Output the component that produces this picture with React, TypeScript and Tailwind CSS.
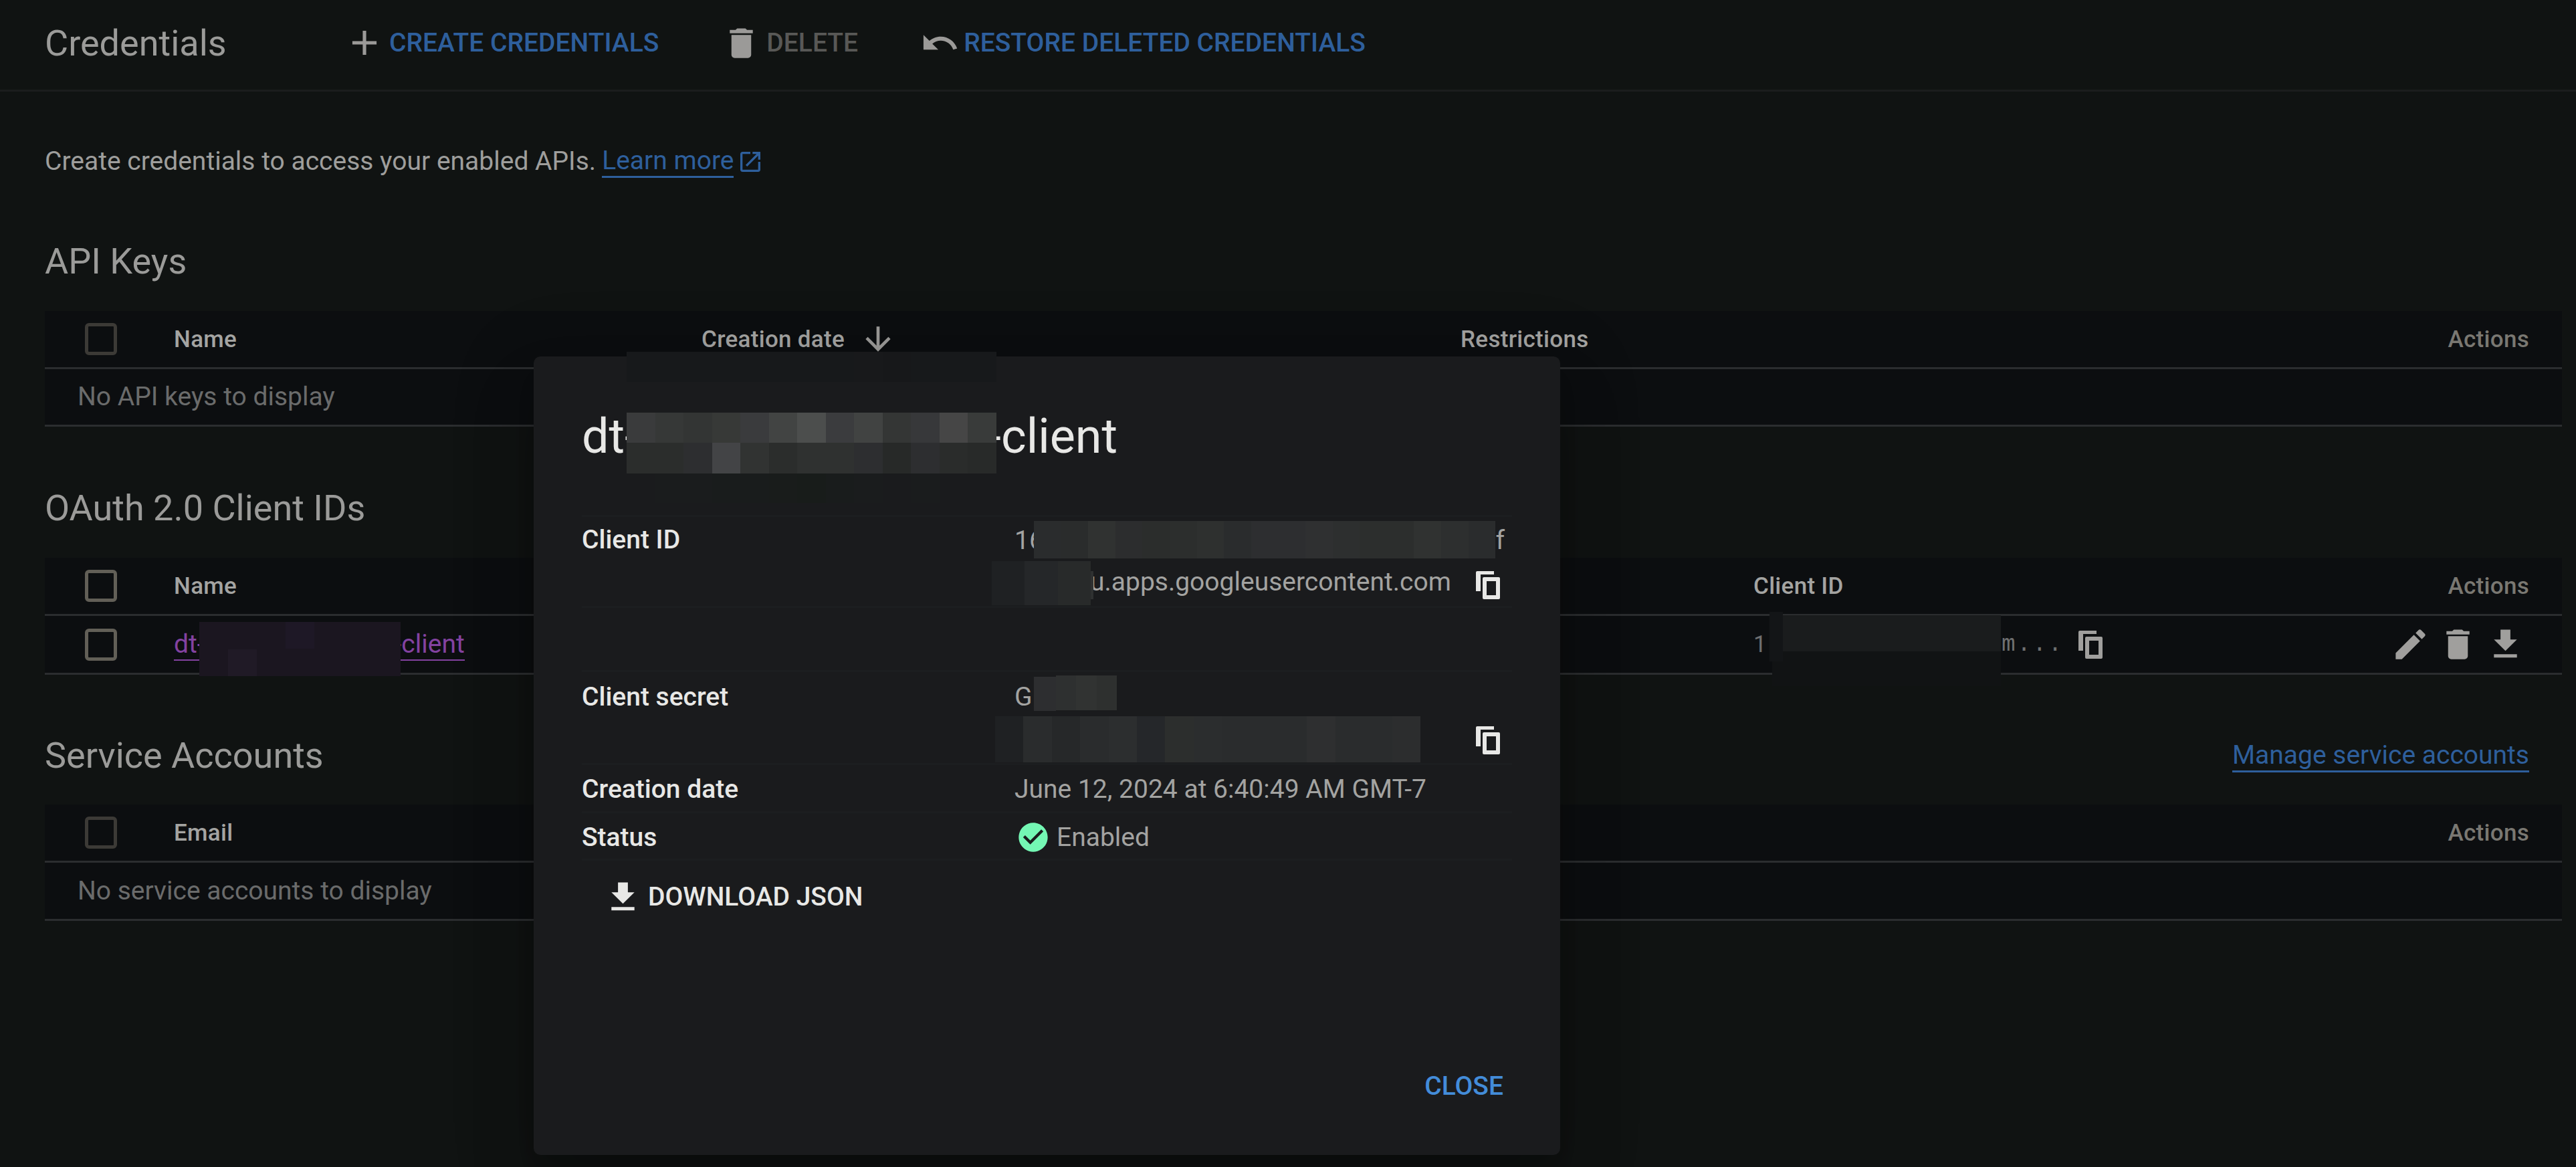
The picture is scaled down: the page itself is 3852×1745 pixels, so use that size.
import React from 'react';

const icons = {
  plus: 'M19 13h-6v6h-2v-6H5v-2h6V5h2v6h6v2z',
  trash: 'M6 19c0 1.1.9 2 2 2h8c1.1 0 2-.9 2-2V7H6v12zM19 4h-3.5l-1-1h-5l-1 1H5v2h14V4z',
  undo: 'M12.5 8c-2.65 0-5.05.99-6.9 2.6L2 7v9h9l-3.62-3.62c1.39-1.16 3.16-1.88 5.12-1.88 3.54 0 6.55 2.31 7.6 5.5l2.37-.78C21.08 11.03 17.15 8 12.5 8z',
  open: 'M19 19H5V5h7V3H5c-1.11 0-2 .9-2 2v14c0 1.1.89 2 2 2h14c1.1 0 2-.9 2-2v-7h-2v7zM14 3v2h3.59l-9.83 9.83 1.41 1.41L19 6.41V10h2V3h-7z',
  arrow: 'M20 12l-1.41-1.41L13 16.17V4h-2v12.17l-5.58-5.59L4 12l8 8 8-8z',
  edit: 'M3 17.25V21h3.75L17.81 9.94l-3.75-3.75L3 17.25zM20.71 7.04c.39-.39.39-1.02 0-1.41l-2.34-2.34c-.39-.39-1.02-.39-1.41 0l-1.83 1.83 3.75 3.75 1.83-1.83z',
  download: 'M19 9h-4V3H9v6H5l7 7 7-7zM5 18v2h14v-2H5z',
  check: 'M12 2C6.48 2 2 6.48 2 12s4.48 10 10 10 10-4.48 10-10S17.52 2 12 2zm-2 15l-5-5 1.41-1.41L10 14.17l7.59-7.59L19 8l-9 9z',
};

function Icon({ d, className }: { d: string; className: string }) {
  return (
    <svg viewBox="0 0 24 24" fill="currentColor" className={`shrink-0 ${className}`}>
      <path d={d} />
    </svg>
  );
}

// the copy glyph in the picture is heavier than the stock one
function CopyIcon({ className }: { className: string }) {
  return (
    <svg viewBox="0 0 36 42" fill="currentColor" className={`h-[42px] w-[36px] shrink-0 ${className}`}>
      <path d="M0 2a2 2 0 0 1 2-2h25v5H7v25H0z" />
      <path
        fillRule="evenodd"
        d="M12 9h22a2 2 0 0 1 2 2v29a2 2 0 0 1-2 2H12a2 2 0 0 1-2-2V11a2 2 0 0 1 2-2zM16 15v21h14V15z"
      />
    </svg>
  );
}

function Checkbox({ dim }: { dim?: boolean }) {
  return (
    <div className={`h-[48px] w-[48px] rounded-[6px] border-[5px] ${dim ? 'border-[#3c3a36]' : 'border-[#625f57]'}`} />
  );
}

// pixelated redaction blocks, they sit over the text
function Pixels({ className, cells }: { className: string; cells: string[] }) {
  return (
    <div className={`absolute flex ${className}`}>
      {cells.map((c, i) => (
        <div key={i} className={`h-full flex-1 ${c}`} />
      ))}
    </div>
  );
}

function TableHead({ dim, children }: { dim?: boolean; children: React.ReactNode }) {
  return (
    <div className="flex h-[87px] items-center border-b-[3px] border-[#2b2d2f] text-[35px] font-medium tracking-[0.3px] text-[#a4a4a2]">
      <div className="w-[193px] pl-[60px]">
        <Checkbox dim={dim} />
      </div>
      {children}
      <div className="ml-auto pr-[49px] text-[#7a7872]">Actions</div>
    </div>
  );
}

function ModalRow({ className, children }: { className: string; children: React.ReactNode }) {
  return <div className={`flex border-b-[3px] border-[#1c1e20] ${className}`}>{children}</div>;
}

export default function App() {
  return (
    <div className="relative h-[1745px] w-[3852px] overflow-hidden bg-[#101312] font-['Roboto',sans-serif] text-[39px] leading-[49px] text-[#9e9e9c]">
      <header className="flex h-[137px] items-center border-b-[3px] border-[#1b1d1d] pb-[6px] pl-[67px] font-medium">
        <h1 className="w-[447px] text-[54px] font-normal text-[#9b9b99]">Credentials</h1>
        <Icon d={icons.plus} className="h-[62px] w-[62px] text-[#9b9a98]" />
        <span className="ml-[6px] text-[#2e5f9c]">CREATE CREDENTIALS</span>
        <Icon d={icons.trash} className="ml-[94px] h-[59px] w-[59px] text-[#9b9a98]" />
        <span className="ml-[8px] text-[#585856]">DELETE</span>
        <Icon d={icons.undo} className="ml-[93px] h-[59px] w-[59px] text-[#9b9a98]" />
        <span className="ml-[6px] text-[#2e5f9c]">RESTORE DELETED CREDENTIALS</span>
      </header>

      <main className="pl-[67px] pr-[21px]">
        <p className="mt-[80px] flex items-center">
          Create credentials to access your enabled APIs.
          <a className="ml-[9px] border-b-[3px] border-[#2e5f9c] leading-[46px] text-[#2e5f9c]">Learn more</a>
          <Icon d={icons.open} className="ml-[5px] h-[40px] w-[40px] text-[#2e5f9c]" />
        </p>

        <h2 className="mt-[90px] text-[54px] leading-[70px] text-[#9b9b99]">API Keys</h2>
        <section className="mt-[39px] bg-[#0c0e10]">
          <TableHead dim>
            <div className="w-[789px]">Name</div>
            <div className="flex w-[1135px] items-center">
              Creation date
              <Icon d={icons.arrow} className="ml-[22px] h-[56px] w-[56px] text-[#9b9a98]" />
            </div>
            <div>Restrictions</div>
          </TableHead>
          <div className="flex h-[86px] items-center border-b-[3px] border-[#2b2d2f] pl-[49px] text-[#6a6b6b]">
            No API keys to display
          </div>
        </section>

        <h2 className="mt-[87px] text-[54px] leading-[70px] text-[#9b9b99]">OAuth 2.0 Client IDs</h2>
        <section className="mt-[39px] bg-[#0c0e10]">
          <TableHead>
            <div className="w-[2362px]">Name</div>
            <div>Client ID</div>
          </TableHead>
          <div className="flex h-[88px] items-center border-b-[3px] border-[#2b2d2f]">
            <div className="w-[193px] pl-[60px]">
              <Checkbox />
            </div>
            <a className="flex w-[2362px]">
              <span className="flex border-b-[2px] border-[#8342a0] leading-[46px] text-[#8342a0]">
                <span>dt-</span>
                <span className="w-[284px]" />
                <span>-client</span>
              </span>
            </a>
            <span className="w-[21px] text-[34.4px] text-[#6f7071]">1</span>
            <span className="ml-[350px] font-['Liberation_Mono',monospace] text-[34.4px] tracking-[2.6px] text-[#6f7071]">m...</span>
            <CopyIcon className="ml-[22px] text-[#a09f9d]" />
            <div className="ml-auto flex gap-[12px] pr-[55px] text-[#a09f9d]">
              <Icon d={icons.edit} className="h-[59px] w-[59px]" />
              <Icon d={icons.trash} className="h-[59px] w-[59px]" />
              <Icon d={icons.download} className="h-[59px] w-[59px]" />
            </div>
          </div>
        </section>

        <div className="mt-[86px] flex items-center justify-between">
          <h2 className="text-[54px] leading-[70px] text-[#9b9b99]">Service Accounts</h2>
          <a className="mr-[49px] border-b-[3px] border-[#2e5f9c] leading-[46px] text-[#2e5f9c]">Manage service accounts</a>
        </div>
        <section className="mt-[38px] bg-[#0c0e10]">
          <TableHead dim>
            <div>Email</div>
          </TableHead>
          <div className="flex h-[87px] items-center border-b-[3px] border-[#2b2d2f] pl-[49px] text-[#6a6b6b]">
            No service accounts to display
          </div>
        </section>
      </main>

      {/* dialog */}
      <div className="absolute left-[798px] top-[533px] flex h-[1194px] w-[1535px] flex-col rounded-[10px] bg-[#1a1b1d] px-[72px] text-[#a3a3a1] shadow-[0_27px_37px_-17px_rgba(0,0,0,0.2),0_59px_93px_7px_rgba(0,0,0,0.14),0_22px_113px_20px_rgba(0,0,0,0.12)]">
        <h2 className="flex h-[240px] shrink-0 items-start border-b-[3px] border-[#1c1e20] pt-[80px] text-[72px] leading-[80px] text-[#e8e8e6]">
          <span>dt-</span>
          <span className="w-[523px]" />
          <span>-client</span>
        </h2>

        <ModalRow className="h-[136px] pt-[4px]">
          <div className="w-[647px] font-medium leading-[60px] text-[#e8e8e6]">Client ID</div>
          <div className="flex-1 leading-[62px]">
            <div className="flex justify-between pr-[11px]">
              <span>16</span>
              <span>f</span>
            </div>
            <div className="flex items-center">
              <span className="w-[690px] pl-[113px]">u.apps.googleusercontent.com</span>
              <CopyIcon className="mt-[10px] text-[#e8e8e6]" />
            </div>
          </div>
        </ModalRow>
        <ModalRow className="h-[96px]">
          <div />
        </ModalRow>
        <ModalRow className="h-[139px] pt-[7px]">
          <div className="w-[647px] font-medium leading-[60px] text-[#e8e8e6]">Client secret</div>
          <div className="flex-1 leading-[60px]">
            <div>G</div>
            <div className="flex h-[60px] items-center pl-[690px]">
              <CopyIcon className="mt-[10px] text-[#e8e8e6]" />
            </div>
          </div>
        </ModalRow>
        <ModalRow className="h-[72px] items-center pt-[4px]">
          <div className="w-[647px] font-medium text-[#e8e8e6]">Creation date</div>
          <div>June 12, 2024 at 6:40:49 AM GMT-7</div>
        </ModalRow>
        <ModalRow className="h-[71px] items-center pt-[4px]">
          <div className="w-[647px] font-medium text-[#e8e8e6]">Status</div>
          <Icon d={icons.check} className="ml-[2px] h-[52px] w-[52px] text-[#74f7b4]" />
          <span className="ml-[9px]">Enabled</span>
        </ModalRow>

        <button className="mt-[25px] flex items-center pl-[32px] font-medium text-[#e8e8e6]">
          <Icon d={icons.download} className="h-[59px] w-[59px]" />
          <span className="ml-[8px]">DOWNLOAD JSON</span>
        </button>

        <div className="mt-[229px] flex justify-end">
          <button className="pr-[13px] font-medium text-[#438cd9]">CLOSE</button>
        </div>
      </div>

      {/* redactions */}
      <Pixels
        className="left-[937px] top-[526px] h-[45px] w-[553px]"
        cells={['bg-[#17191b]', 'bg-[#17191b]', 'bg-[#17191b]', 'bg-[#17191b]', 'bg-[#17191b]', 'bg-[#17191b]', 'bg-[#17191b]', 'bg-[#17191b]', 'bg-[#18191b]', 'bg-[#17181a]', 'bg-[#17191b]', 'bg-[#17191b]', 'bg-[#17191b]']}
      />
      <Pixels
        className="left-[937px] top-[617px] h-[45px] w-[553px]"
        cells={['bg-[#3a3b3c]', 'bg-[#363837]', 'bg-[#333534]', 'bg-[#373937]', 'bg-[#3a3b3d]', 'bg-[#424443]', 'bg-[#4c4e4d]', 'bg-[#3b3c3e]', 'bg-[#414342]', 'bg-[#343635]', 'bg-[#37383a]', 'bg-[#464646]', 'bg-[#393b3a]']}
      />
      <Pixels
        className="left-[937px] top-[662px] h-[46px] w-[553px]"
        cells={['bg-[#2b2d2c]', 'bg-[#2b2d2c]', 'bg-[#2d2e30]', 'bg-[#434446]', 'bg-[#313332]', 'bg-[#2b2d2c]', 'bg-[#2f3130]', 'bg-[#2f3130]', 'bg-[#2d2e30]', 'bg-[#272928]', 'bg-[#2d2e30]', 'bg-[#2a2c2b]', 'bg-[#282a29]']}
      />
      <Pixels
        className="left-[937px] top-[708px] h-[44px] w-[553px]"
        cells={['bg-[#1a1b1d]', 'bg-[#1a1c1d]', 'bg-[#1a1c1d]', 'bg-[#191c1c]', 'bg-[#191c1c]', 'bg-[#191c1b]', 'bg-[#181c1a]', 'bg-[#191c1c]', 'bg-[#1a1c1d]', 'bg-[#1a1b1d]', 'bg-[#1a1c1d]', 'bg-[#1a1b1d]', 'bg-[#1a1b1d]']}
      />
      <Pixels
        className="left-[1546px] top-[779px] h-[56px] w-[690px]"
        cells={['bg-[#2a2c2d]', 'bg-[#2a2c2c]', 'bg-[#303231]', 'bg-[#2c2d2e]', 'bg-[#2b2d2c]', 'bg-[#2c2e2d]', 'bg-[#2e302f]', 'bg-[#2a2c2d]', 'bg-[#2d2e30]', 'bg-[#2d2e30]', 'bg-[#2f3031]', 'bg-[#2d2f2f]', 'bg-[#2c2e2d]', 'bg-[#2c2e2d]', 'bg-[#303231]', 'bg-[#2d2f2f]', 'bg-[#2a2c2d]']}
      />
      <div className="absolute left-[1631px] top-[854px] h-[42px] w-[4px] bg-[#2f3131]" />
      <Pixels
        className="left-[1483px] top-[839px] h-[66px] w-[148px]"
        cells={['bg-[#1f2123]', 'bg-[#252729]', 'bg-[#282a2a]']}
      />
      <div className="absolute left-[1546px] top-[1012px] h-[51px] w-[33px] bg-[#2d2e30]" />
      <Pixels
        className="left-[1579px] top-[1010px] h-[52px] w-[91px]"
        cells={['bg-[#2e3030]', 'bg-[#313332]', 'bg-[#2e302f]']}
      />
      <Pixels
        className="left-[1488px] top-[1071px] h-[69px] w-[636px]"
        cells={['bg-[#1f2123]', 'bg-[#2a2c2d]', 'bg-[#262829]', 'bg-[#2a2c2d]', 'bg-[#2c2e2f]', 'bg-[#25272a]', 'bg-[#2c2e2d]', 'bg-[#2b2d2e]', 'bg-[#2a2c2d]', 'bg-[#2a2c2d]', 'bg-[#2a2c2d]', 'bg-[#2e2f30]', 'bg-[#2a2c2d]', 'bg-[#2a2c2d]', 'bg-[#2c2d2e]']}
      />

      <div className="absolute left-[298px] top-[930px] h-[81px] w-[301px] bg-[#1b1620]" />
      <div className="absolute left-[427px] top-[930px] h-[40px] w-[43px] bg-[#1e1826]" />
      <div className="absolute left-[341px] top-[971px] h-[40px] w-[43px] bg-[#201a26]" />

      <div className="absolute left-[2666px] top-[920px] h-[54px] w-[326px] bg-[#1a1c1d]" />
      <div className="absolute left-[2650px] top-[974px] h-[52px] w-[342px] bg-[#111314]" />
      <div className="absolute left-[2646px] top-[915px] h-[74px] w-[20px] bg-[#131517]" />
    </div>
  );
}
